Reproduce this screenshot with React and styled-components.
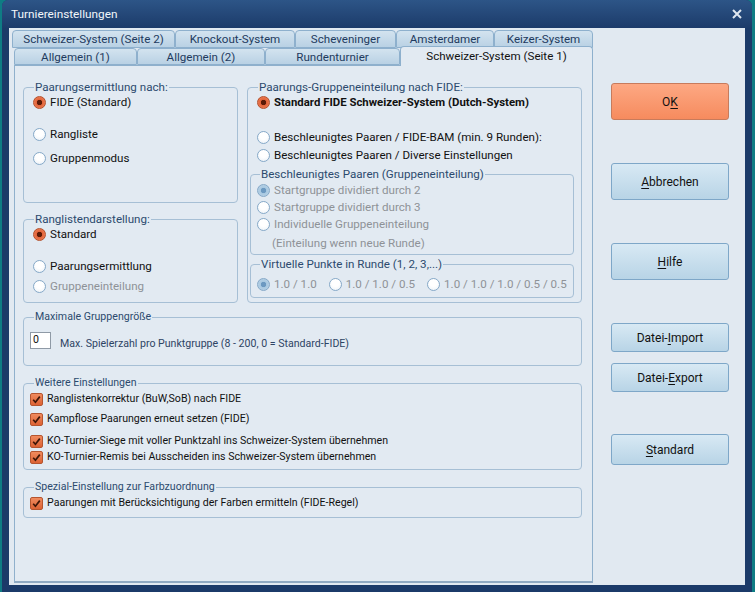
import styled, { createGlobalStyle } from "styled-components";

const GlobalStyle = createGlobalStyle`
  html, body {
    margin: 0;
    padding: 0;
    background: #0f7c84;
  }
  body {
    font-family: Roboto, "Noto Sans", sans-serif;
    font-size: 11.6px;
  }
`;

const Window = styled.div`
  margin: 0 3px 0 2px;
  height: 592px;
  background: #1b3a69;
  border-radius: 6px 6px 0 0;
  display: flex;
  flex-direction: column;
  box-sizing: border-box;
`;

const TitleBar = styled.div`
  height: 28px;
  flex: none;
  display: flex;
  align-items: center;
  justify-content: space-between;
  padding: 0 10px 0 9px;
  border-radius: 6px 6px 0 0;
  background: linear-gradient(#2d5587, #1c3b6a);
  color: #f2f6fa;
  font-size: 11.8px;
`;

const Content = styled.div`
  flex: 1;
  margin: 0 7px 7px;
  background: #e1e9f1;
  display: flex;
  padding: 2px 0 0 3px;
`;

const TabArea = styled.div`
  width: 581px;
  display: flex;
  flex-direction: column;
`;

const TabRow = styled.div`
  display: flex;
  align-items: flex-end;
  height: ${(p) => p.$h}px;
  margin-left: ${(p) => p.$ml || 0}px;
`;

const Tab = styled.div`
  position: relative;
  width: ${(p) => p.$w}px;
  height: ${(p) => (p.$active ? 20 : p.$h)}px;
  margin-bottom: ${(p) => (p.$active ? -1 : 0)}px;
  z-index: ${(p) => (p.$active ? 2 : 0)};
  box-sizing: border-box;
  border: 1px solid #8eb0cd;
  border-bottom: ${(p) => (p.$active ? "none" : "1px solid #8eb0cd")};
  border-radius: 4px 4px 0 0;
  background: ${(p) =>
    p.$active ? "#e2eaf2" : "linear-gradient(#d3e3ef, #b9d1e4)"};
  color: ${(p) => (p.$active ? "#111" : "#1e3a5e")};
  display: flex;
  align-items: ${(p) => (p.$active ? "flex-start" : "center")};
  padding-top: ${(p) => (p.$active ? 2 : 0)}px;
  justify-content: center;
  white-space: nowrap;
`;

const Panel = styled.div`
  margin-left: 2px;
  width: 579px;
  height: 518px;
  box-sizing: border-box;
  border: 1px solid #8fb0cc;
  border-bottom: 2px solid #8fa9c2;
  background: #e2eaf2;
  padding: 14px 0 0 8px;
`;

const TopGrid = styled.div`
  display: grid;
  grid-template-columns: 215px 335px;
  column-gap: 9px;
`;

const Column = styled.div`
  display: flex;
  flex-direction: column;
  gap: 9px;
`;

const Group = styled.fieldset`
  margin: ${(p) => p.$mt || 0}px 0 0 ${(p) => p.$ml || 0}px;
  padding: 0;
  width: ${(p) => p.$w}px;
  height: ${(p) => p.$h}px;
  min-width: 0;
  box-sizing: border-box;
  border: 1px solid #a6bfd5;
  border-radius: 4px;
  font-size: ${(p) => (p.$small ? "10.6px" : "inherit")};
`;

const Legend = styled.legend`
  margin-left: ${(p) => p.$ml || 10}px;
  padding: 0 1px;
  line-height: 14px;
  color: #2c4a6e;
  white-space: nowrap;
`;

const Row = styled.div`
  display: flex;
  align-items: center;
  height: 16px;
  margin: ${(p) => p.$mt || 0}px 0 0 ${(p) => p.$ml || 0}px;
  white-space: nowrap;
`;

const Label = styled.span`
  margin-left: 4px;
  margin-right: ${(p) => p.$mr || 0}px;
  line-height: 14px;
  color: ${(p) => (p.$disabled ? "#8e9297" : "#111")};
  font-weight: ${(p) => (p.$bold ? 700 : 400)};
  font-size: ${(p) => (p.$bold ? "11.4px" : "inherit")};
`;

const Note = styled.span`
  line-height: 14px;
  color: #8e9297;
`;

const radioBg = {
  on: "radial-gradient(circle, #5c1b08 0 2.4px, #e2643a 3px, #f28a63 100%)",
  off: "radial-gradient(circle at 50% 35%, #ffffff 40%, #e6eef6)",
  dimOn: "radial-gradient(circle, #6c99c1 0 2.4px, #a8c8e1 3px, #bfd6e8 100%)",
  dimOff: "radial-gradient(circle at 50% 35%, #ffffff 40%, #e9f0f6)",
};

const Radio = styled.span`
  display: block;
  flex: none;
  width: 13px;
  height: 13px;
  box-sizing: border-box;
  border-radius: 50%;
  border: 1px solid ${(p) => (p.$state === "on" ? "#b4502c" : "#86a9c8")};
  background: ${(p) => radioBg[p.$state]};
`;

const Check = styled.span`
  flex: none;
  width: 13px;
  height: 13px;
  box-sizing: border-box;
  border-radius: 2px;
  border: 1px solid #b5552f;
  background: linear-gradient(#f08b5e, #dc6234);
  display: flex;
  align-items: center;
  justify-content: center;
`;

const Input = styled.div`
  width: 21px;
  height: 17px;
  box-sizing: border-box;
  border: 1px solid #8f9aa6;
  background: #fff;
  padding-left: 2px;
  line-height: 14px;
  color: #111;
`;

const Hint = styled.span`
  margin: 5px 0 0 9px;
  line-height: 14px;
  color: #2e4464;
`;

const InputRow = styled.div`
  display: flex;
  align-items: flex-start;
  margin: 8px 0 0 6px;
  white-space: nowrap;
`;

const ButtonCol = styled.div`
  margin-left: 18px;
  width: 118px;
  padding-top: 53px;
  display: flex;
  flex-direction: column;
`;

const Button = styled.div`
  height: ${(p) => p.$h}px;
  margin-top: ${(p) => p.$mt || 0}px;
  box-sizing: border-box;
  border-radius: 3px;
  border: 1px solid ${(p) => (p.$primary ? "#c77b5c" : "#7ea7c8")};
  background: ${(p) =>
    p.$primary
      ? "linear-gradient(#fda883, #f68b5e)"
      : "linear-gradient(#d8e9f4, #b8d4e6)"};
  display: flex;
  align-items: center;
  justify-content: center;
  color: #111;
  font-size: 12px;
  u {
    text-decoration-thickness: 1px;
    text-underline-offset: 2px;
  }
`;

function CheckMark() {
  return (
    <svg width="9" height="9" viewBox="0 0 9 9">
      <path d="M1.2 4.8 L3.4 7.2 L7.8 1.6" fill="none" stroke="#3d1608" strokeWidth="1.7" />
    </svg>
  );
}

function RadioRow({ state = "off", children, mt, ml = 9, bold, disabled }) {
  return (
    <Row $mt={mt} $ml={ml}>
      <Radio $state={state} />
      <Label $bold={bold} $disabled={disabled}>{children}</Label>
    </Row>
  );
}

function CheckRow({ children, mt }) {
  return (
    <Row $mt={mt} $ml={6}>
      <Check>
        <CheckMark />
      </Check>
      <Label>{children}</Label>
    </Row>
  );
}

const backTabs = [
  ["Schweizer-System (Seite 2)", 163],
  ["Knockout-System", 120],
  ["Scheveninger", 101],
  ["Amsterdamer", 98],
  ["Keizer-System", 99],
];

const frontTabs = [
  ["Allgemein (1)", 123],
  ["Allgemein (2)", 128],
  ["Rundenturnier", 135],
  ["Schweizer-System (Seite 1)", 193, true],
];

export default function App() {
  return (
    <>
      <GlobalStyle />
      <Window>
        <TitleBar>
          <span>Turniereinstellungen</span>
          <svg width="10" height="10" viewBox="0 0 10 10">
            <path d="M1 1 L9 9 M9 1 L1 9" stroke="#dfe7f0" strokeWidth="2" />
          </svg>
        </TitleBar>
        <Content>
          <TabArea>
            <TabRow $h={18}>
              {backTabs.map(([t, w]) => (
                <Tab key={t} $w={w} $h={18}>{t}</Tab>
              ))}
            </TabRow>
            <TabRow $h={17} $ml={2}>
              {frontTabs.map(([t, w, a]) => (
                <Tab key={t} $w={w} $h={17} $active={a}>{t}</Tab>
              ))}
            </TabRow>
            <Panel>
              <TopGrid>
                <Column>
                  <Group $h={123}>
                    <Legend>Paarungsermittlung nach:</Legend>
                    <RadioRow state="on">FIDE (Standard)</RadioRow>
                    <RadioRow mt={16}>Rangliste</RadioRow>
                    <RadioRow mt={8}>Gruppenmodus</RadioRow>
                  </Group>
                  <Group $h={91}>
                    <Legend>Ranglistendarstellung:</Legend>
                    <RadioRow state="on">Standard</RadioRow>
                    <RadioRow mt={16}>Paarungsermittlung</RadioRow>
                    <RadioRow mt={4} state="dimOff" disabled>Gruppeneinteilung</RadioRow>
                  </Group>
                </Column>
                <Group $h={223}>
                  <Legend>Paarungs-Gruppeneinteilung nach FIDE:</Legend>
                  <RadioRow state="on" bold>Standard FIDE Schweizer-System (Dutch-System)</RadioRow>
                  <RadioRow mt={19}>Beschleunigtes Paaren / FIDE-BAM (min. 9 Runden):</RadioRow>
                  <RadioRow mt={2}>Beschleunigtes Paaren / Diverse Einstellungen</RadioRow>
                  <Group $mt={4} $ml={2} $w={324} $h={88}>
                    <Legend $ml={9}>Beschleunigtes Paaren (Gruppeneinteilung)</Legend>
                    <RadioRow mt={1} ml={6} state="dimOn" disabled>Startgruppe dividiert durch 2</RadioRow>
                    <RadioRow mt={1} ml={6} state="dimOff" disabled>Startgruppe dividiert durch 3</RadioRow>
                    <RadioRow mt={1} ml={6} state="dimOff" disabled>Individuelle Gruppeneinteilung</RadioRow>
                    <Row $mt={3} $ml={21}>
                      <Note>(Einteilung wenn neue Runde)</Note>
                    </Row>
                  </Group>
                  <Group $mt={2} $ml={2} $w={324} $h={41}>
                    <Legend $ml={9}>Virtuelle Punkte in Runde (1, 2, 3,...)</Legend>
                    <Row $mt={5} $ml={6}>
                      <Radio $state="dimOn" />
                      <Label $disabled $mr={12}>1.0 / 1.0</Label>
                      <Radio $state="dimOff" />
                      <Label $disabled $mr={12}>1.0 / 1.0 / 0.5</Label>
                      <Radio $state="dimOff" />
                      <Label $disabled>1.0 / 1.0 / 1.0 / 0.5 / 0.5</Label>
                    </Row>
                  </Group>
                </Group>
              </TopGrid>
              <Group $mt={7} $w={559} $h={56} $small>
                <Legend>Maximale Gruppengröße</Legend>
                <InputRow>
                  <Input>0</Input>
                  <Hint>Max. Spielerzahl pro Punktgruppe (8 - 200, 0 = Standard-FIDE)</Hint>
                </InputRow>
              </Group>
              <Group $mt={10} $w={559} $h={94} $small>
                <Legend>Weitere Einstellungen</Legend>
                <CheckRow mt={1}>Ranglistenkorrektur (BuW,SoB) nach FIDE</CheckRow>
                <CheckRow mt={4}>Kampflose Paarungen erneut setzen (FIDE)</CheckRow>
                <CheckRow mt={6}>KO-Turnier-Siege mit voller Punktzahl ins Schweizer-System übernehmen</CheckRow>
                <CheckRow mt={0}>KO-Turnier-Remis bei Ausscheiden ins Schweizer-System übernehmen</CheckRow>
              </Group>
              <Group $mt={10} $w={559} $h={38} $small>
                <Legend>Spezial-Einstellung zur Farbzuordnung</Legend>
                <CheckRow mt={1}>Paarungen mit Berücksichtigung der Farben ermitteln (FIDE-Regel)</CheckRow>
              </Group>
            </Panel>
          </TabArea>
          <ButtonCol>
            <Button $primary $h={37}>O<u>K</u></Button>
            <Button $h={37} $mt={43}><u>A</u>bbrechen</Button>
            <Button $h={37} $mt={43}><u>H</u>ilfe</Button>
            <Button $h={29} $mt={43}>Datei-<u>I</u>mport</Button>
            <Button $h={29} $mt={11}>Datei-<u>E</u>xport</Button>
            <Button $h={31} $mt={42}><u>S</u>tandard</Button>
          </ButtonCol>
        </Content>
      </Window>
    </>
  );
}
